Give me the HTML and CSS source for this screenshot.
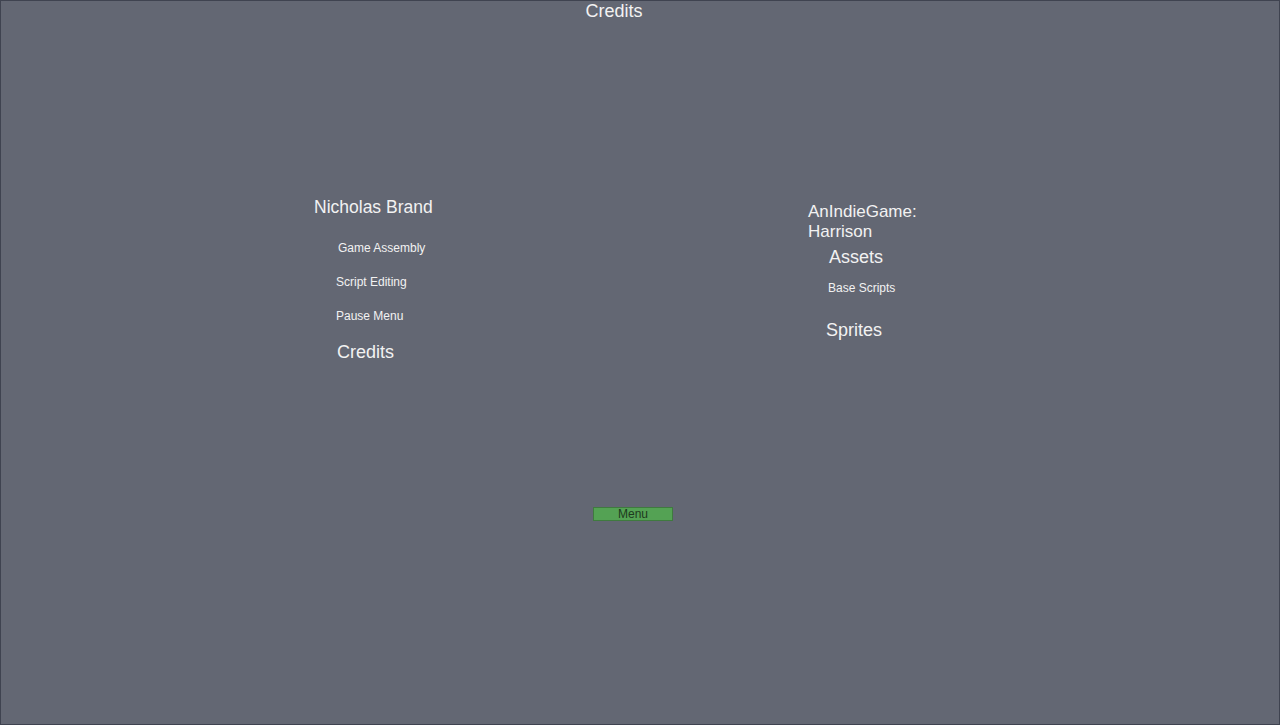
FILE: index.html
```html
<!DOCTYPE html>
<html>
<head>
<meta charset="utf-8">
<link rel="stylesheet" href="styles.css">
</head>
<body>
<div class="page">
  <div class="title">Credits</div>
  <div class="groups">
    <div class="group left">
      <div class="big name-nb">Nicholas Brand</div>
      <div class="small ga">Game Assembly</div>
      <div class="small se">Script Editing</div>
      <div class="small pm">Pause Menu</div>
      <div class="big cr">Credits</div>
    </div>
    <div class="group right">
      <div class="big name-aig">AnIndieGame: Harrison</div>
      <div class="big as">Assets</div>
      <div class="small bs">Base Scripts</div>
      <div class="big sp">Sprites</div>
    </div>
  </div>
  <div class="menu-row"><div class="menu-btn">Menu</div></div>
</div>
</body>
</html>
```
FILE: styles.css
```css
html, body {
  margin: 0;
  padding: 0;
  background: #636773;
}
.page {
  box-sizing: border-box;
  width: 1280px;
  height: 725px;
  border: 1px solid #3f4350;
  background: #636773;
  color: #f2f2f2;
  font-family: "Liberation Sans", Arial, sans-serif;
  display: flex;
  flex-direction: column;
  overflow: hidden;
}
.title {
  text-align: center;
  font-size: 18px;
  line-height: 20px;
  padding-right: 52px;
}
.groups {
  display: flex;
  align-items: flex-start;
  margin-top: 176px;
  padding-left: 313px;
  height: 164px;
}
.group.left {
  width: 494px;
}
.group.right {
  margin-top: 5px;
}
.big {
  font-size: 18px;
  line-height: 20px;
}
.small {
  font-size: 12px;
  line-height: 14px;
}
.name-nb {
  font-size: 17.5px;
}
.ga { margin: 24px 0 0 24px; }
.se { margin: 20px 0 0 22px; }
.pm { margin: 20px 0 0 22px; }
.cr { margin: 19px 0 0 23px; }
.name-aig {
  font-size: 17px;
  width: 118px;
}
.as { margin: 5px 0 0 21px; }
.bs { margin: 14px 0 0 20px; }
.sp { margin: 25px 0 0 18px; }
.menu-row {
  margin-top: 146px;
  padding-left: 592px;
}
.menu-btn {
  box-sizing: border-box;
  width: 80px;
  height: 14px;
  border: 1px solid #3f7a3f;
  background: #54a254;
  color: #1e3a1e;
  font-size: 12px;
  line-height: 12px;
  text-align: center;
}
```
